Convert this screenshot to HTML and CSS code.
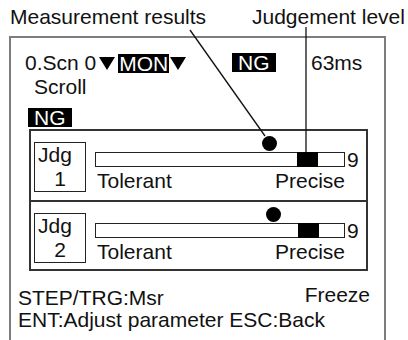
FILE: index.html
```html
<!DOCTYPE html>
<html lang="en">
<head>
<meta charset="UTF-8" />
<meta name="viewport" content="width=device-width, initial-scale=1" />
<title>Judgement level</title>
<link rel="stylesheet" href="styles.css">
</head>
<body>
  <div class="page">
    <div class="callouts">
      <span>Measurement results</span>
      <span>Judgement level</span>
    </div>

    <div class="screen">
      <div class="status">
        <div class="status-mode">
          <span>0.Scn 0</span>
          <svg class="tri" width="16" height="13" viewBox="0 0 16 13"><polygon points="0,0 16,0 8,13" /></svg>
          <span class="inv mon">MON</span>
          <svg class="tri tri-after" width="16" height="13" viewBox="0 0 16 13"><polygon points="0,0 16,0 8,13" /></svg>
        </div>
        <div><span class="inv badge">NG</span></div>
        <div>63ms</div>
      </div>
      <div class="scroll">Scroll</div>
      <div class="overall"><span class="inv badge">NG</span></div>

      <div class="panel">
        <div class="row">
          <div class="jdg">
            <div class="jdg-name">Jdg</div>
            <div class="jdg-num">1</div>
          </div>
          <div class="scale">
            <div class="track-line">
              <div class="track">
                <span class="result" style="left: 166px;"></span>
                <span class="level" style="left: 201px;"></span>
              </div>
              <span class="max">9</span>
            </div>
            <div class="ends"><span>Tolerant</span><span>Precise</span></div>
          </div>
        </div>
        <div class="row">
          <div class="jdg">
            <div class="jdg-name">Jdg</div>
            <div class="jdg-num">2</div>
          </div>
          <div class="scale">
            <div class="track-line">
              <div class="track">
                <span class="result" style="left: 170px;"></span>
                <span class="level" style="left: 202px;"></span>
              </div>
              <span class="max">9</span>
            </div>
            <div class="ends"><span>Tolerant</span><span>Precise</span></div>
          </div>
        </div>
      </div>

      <div class="footer">
        <div class="footer-top">
          <span class="hint">STEP/TRG:Msr</span>
          <span>Freeze</span>
        </div>
        <div>ENT:Adjust parameter ESC:Back</div>
      </div>
    </div>

    <!-- leader lines from the callouts -->
    <svg class="leaders" width="408" height="340" viewBox="0 0 408 340">
      <line x1="190" y1="30" x2="265" y2="136" />
      <line x1="306" y1="27" x2="306" y2="152" />
    </svg>
  </div>
</body>
</html>
```

FILE: styles.css
```css
/* Base */
* {
  box-sizing: border-box;
}
body {
  margin: 0;
  font-family: "Liberation Sans", Arial, sans-serif;
  font-size: 21px;
  color: #111;
  background: #fff;
}

.page {
  position: relative;
  width: 408px;
  height: 340px;
  overflow: hidden;
}

/* Callout labels */
.callouts {
  display: grid;
  grid-template-columns: 242px auto;
  padding: 5px 0 0 10px;
  line-height: 24px;
}

/* LCD screen */
.screen {
  margin: 7px 0 0 9px;
  width: 377px;
  height: 304px;
  border: 2px solid #7d7d7d;
  border-bottom: 0;
}

.status {
  display: grid;
  grid-template-columns: 207px 79px auto;
  align-items: center;
  height: 24px;
  line-height: 24px;
  margin-top: 13px;
  padding-left: 14px;
}
.status-mode {
  display: flex;
  align-items: center;
}
.tri {
  margin-left: 3px;
  fill: #000;
}
.tri-after {
  margin-left: 1px;
}
.mon {
  margin-left: 3px;
  padding: 0 1px;
}

.inv {
  display: inline-block;
  background: #000;
  color: #fff;
  line-height: 19px;
}
.badge {
  padding: 0 6px;
}

.scroll {
  line-height: 24px;
  padding-left: 23px;
}
.overall {
  margin: 9px 0 0 17px;
  height: 19px;
  line-height: 19px;
}

/* Judgement panel */
.panel {
  margin: 2px 0 0 18px;
  width: 339px;
  border: 2px solid #333;
}
.row {
  display: flex;
  align-items: flex-start;
  height: 69px;
  padding-top: 11px;
}
.row + .row {
  border-top: 2px solid #333;
}
.jdg {
  width: 52px;
  height: 50px;
  margin-left: 3px;
  border: 1px solid #222;
  line-height: 24px;
}
.jdg-name {
  padding-left: 3px;
}
.jdg-num {
  text-align: center;
}

.scale {
  margin-left: 9px;
  padding-top: 10px;
}
.track-line {
  display: flex;
  align-items: center;
}
.track {
  position: relative;
  width: 250px;
  height: 15px;
  border: 1px solid #222;
}
.result {
  position: absolute;
  top: -17px;
  width: 15px;
  height: 15px;
  border-radius: 50%;
  background: #000;
}
.level {
  position: absolute;
  top: -1px;
  bottom: -1px;
  width: 21px;
  background: #000;
}
.max {
  margin-left: 2px;
  line-height: 15px;
}
.ends {
  display: flex;
  justify-content: space-between;
  width: 250px;
  padding: 2px 0 0 2px;
  line-height: 24px;
}

/* Key hints */
.footer {
  margin-top: 13px;
  padding: 0 14px 0 7px;
  line-height: 22px;
}
.footer-top {
  display: flex;
  justify-content: space-between;
  align-items: flex-start;
}
.hint {
  padding-top: 3px;
}

.leaders {
  position: absolute;
  top: 0;
  left: 0;
  pointer-events: none;
}
.leaders line {
  stroke: #111;
  stroke-width: 1.3;
}
```
